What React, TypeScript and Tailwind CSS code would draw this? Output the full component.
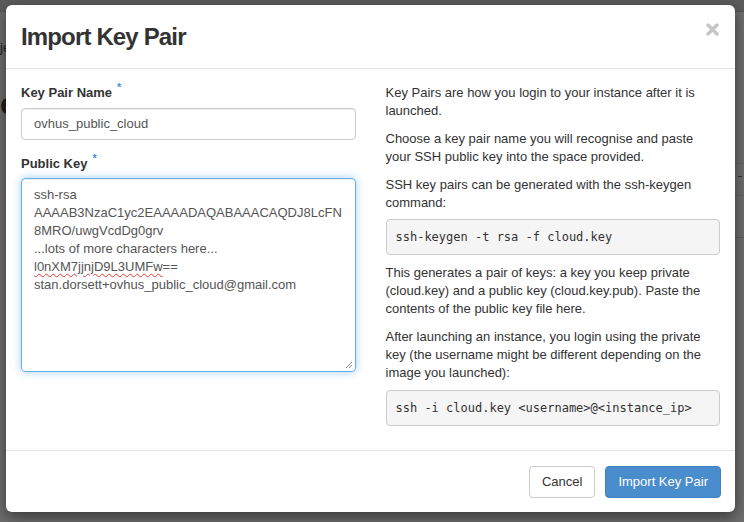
import React from 'react';

const keyLines = [
  'ssh-rsa',
  'AAAAB3NzaC1yc2EAAAADAQABAAACAQDJ8LcFN',
  '8MRO/uwgVcdDg0grv',
  '...lots of more characters here...',
];

function Required() {
  return <span className="ml-[5px] relative -top-[6px] text-[11px] text-[#4a8fd6]">*</span>;
}

function CloseIcon() {
  return (
    <svg width="13" height="13" viewBox="0 0 13 13">
      <path d="M2 2 L11 11 M11 2 L2 11" stroke="#c6c6c6" strokeWidth="3.4" strokeLinecap="round" />
    </svg>
  );
}

function ResizeGrip() {
  return (
    <svg className="absolute right-[2px] bottom-[2px]" width="8" height="8" viewBox="0 0 8 8">
      <path d="M7 1 L1 7 M7 4 L4 7" stroke="#8a8a8a" strokeWidth="1" />
    </svg>
  );
}

function CodeBlock({ children }: { children: React.ReactNode }) {
  return (
    <pre className="mb-[9px] px-[9px] py-[8px] rounded-[4px] border border-[#ccc] bg-[#f5f5f5] font-['DejaVu_Sans_Mono',monospace] text-[12px] leading-[18px] text-[#333]">
      {children}
    </pre>
  );
}

export default function App() {
  return (
    <div className="relative w-[744px] h-[522px] overflow-hidden bg-[#6e6e6e] font-['Liberation_Sans',Arial,sans-serif] text-[#333]">
      {/* page behind the backdrop */}
      <div className="h-[12px] bg-[#5c5c5c] border-b border-[#555]" />
      <div className="flex">
        <div className="flex flex-col text-[#1e1e1e]">
          <span className="mt-[27px] text-[13px] leading-[18px]">je</span>
          <span className="mt-[30px] text-[30px] leading-[34px] font-bold">e</span>
        </div>
        <div className="flex-1 flex flex-col items-end pt-[151px]">
          <div className="w-[14px] border-t border-[#626262]" />
          <div className="mt-[12px] mr-[2px] w-[4px] border-t border-[#333]" />
          <div className="mt-[18px] w-[14px] border-t border-[#626262]" />
          <div className="mt-[41px] w-[14px] border-t border-[#5f5f5f]" />
        </div>
      </div>

      {/* modal */}
      <div className="absolute left-[6px] top-[5px] w-[729px] rounded-[6px] bg-white shadow-[0_5px_15px_rgba(0,0,0,0.5)]">
        <div className="flex items-center justify-between px-[15px] py-[15px] border-b border-[#e5e5e5]">
          <h4 className="text-[24px] leading-[33px] font-bold tracking-[-0.85px] text-[#333]">Import Key Pair</h4>
          <div className="self-start mt-[3px] mr-[1px]">
            <CloseIcon />
          </div>
        </div>

        <div className="grid grid-cols-2 gap-[30px] p-[15px] text-[13px] leading-[18px]">
          <div>
            <label className="block font-bold">
              Key Pair Name
              <Required />
            </label>
            <div className="mt-[6px] h-[32px] flex items-center px-[12px] rounded-[4px] border border-[#ccc] shadow-[inset_0_1px_1px_rgba(0,0,0,0.075)] text-[#555]">
              ovhus_public_cloud
            </div>

            <label className="block font-bold mt-[15px]">
              Public Key
              <Required />
            </label>
            <div className="relative mt-[5px] h-[194px] px-[12px] pt-[7px] pb-[6px] rounded-[4px] border border-[#66afe9] shadow-[inset_0_1px_1px_rgba(0,0,0,0.075),0_0_8px_rgba(102,175,233,0.6)] text-[#555] whitespace-pre">
              {keyLines.map((l) => (
                <div key={l}>{l}</div>
              ))}
              <div>
                <span className="underline decoration-wavy decoration-[#e23b3b] decoration-1 underline-offset-[2px]">l0nXM7jjnjD9L3UMFw</span>==
              </div>
              <div>stan.dorsett+ovhus_public_cloud@gmail.com</div>
              <ResizeGrip />
            </div>
          </div>

          <div>
            <p className="mb-[10px]">Key Pairs are how you login to your instance after it is launched.</p>
            <p className="mb-[10px]">Choose a key pair name you will recognise and paste your SSH public key into the space provided.</p>
            <p className="mb-[7px]">SSH key pairs can be generated with the ssh-keygen command:</p>
            <CodeBlock>ssh-keygen -t rsa -f cloud.key</CodeBlock>
            <p className="mb-[10px]">
              This generates a pair of keys: a key you keep private (cloud.key) and a public key (cloud.key.pub). Paste the contents of the public key file here.
            </p>
            <p className="mb-[8px]">
              After launching an instance, you login using the private key (the username might be different depending on the image you launched):
            </p>
            <CodeBlock>ssh -i cloud.key &lt;username&gt;@&lt;instance_ip&gt;</CodeBlock>
          </div>
        </div>

        <div className="flex justify-end gap-[10px] px-[14px] pt-[15px] pb-[14px] border-t border-[#e5e5e5] text-[13px]">
          <button className="h-[32px] px-[12px] rounded-[4px] border border-[#ccc] bg-white text-[#333]">Cancel</button>
          <button className="h-[32px] px-[12px] rounded-[4px] border border-[#3f80c4] bg-[#4a8dcd] text-white">Import Key Pair</button>
        </div>
      </div>
    </div>
  );
}
